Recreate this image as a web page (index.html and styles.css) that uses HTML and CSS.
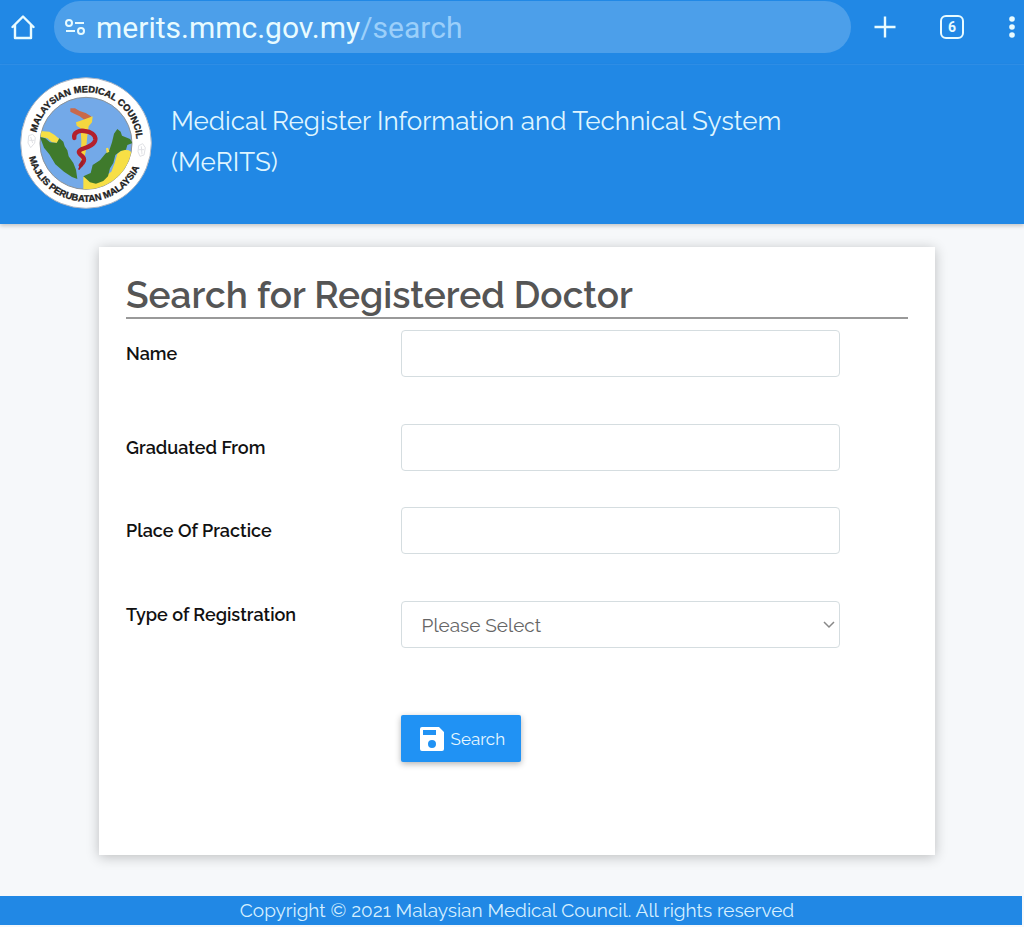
FILE: index.html
```
<!DOCTYPE html>
<html lang="en">
<head>
    <meta charset="UTF-8">
    <meta name="viewport" content="width=device-width, initial-scale=1.0">
    <title>MeRITS</title>
    <link rel="stylesheet" href="styles.css">
</head>
<body>
    <div class="browser-bar">
        <button class="bar-btn" type="button" aria-label="Home">
            <svg width="24" height="26" viewBox="0 0 24 26" fill="none" stroke="currentColor" stroke-width="2.4" stroke-linejoin="round" stroke-linecap="round">
                <path d="M1.5 13 12 2.500l10.500 10.500M4 11v13h16V11"/>
            </svg>
        </button>
        <div class="url-bar">
            <svg width="20" height="18" viewBox="0 0 20 18" fill="none" stroke="currentColor" stroke-width="2">
                <circle cx="4" cy="5" r="3"/>
                <path d="M10 5h9M1 13h9"/>
                <circle cx="16" cy="13" r="3"/>
            </svg>
            <span class="url">merits.mmc.gov.my<span class="url-path">/search</span></span>
        </div>
        <div class="bar-actions">
            <button class="bar-btn" type="button" aria-label="New tab">
                <svg width="22" height="22" viewBox="0 0 22 22" fill="none" stroke="currentColor" stroke-width="2.4">
                    <path d="M11 0.500v21M0.500 11h21"/>
                </svg>
            </button>
            <button class="bar-btn tab-count" type="button">6</button>
            <button class="bar-btn" type="button" aria-label="Menu">
                <svg width="8" height="22" viewBox="0 0 8 22" fill="currentColor">
                    <circle cx="4" cy="3" r="2.800"/>
                    <circle cx="4" cy="11" r="2.800"/>
                    <circle cx="4" cy="19" r="2.800"/>
                </svg>
            </button>
        </div>
    </div>

    <header class="header">
        <svg class="logo" viewBox="60 50 396 396" role="img" aria-label="Malaysian Medical Council">
            <defs>
                <path id="arc-top" d="M106 248a152 152 0 0 1 304 0"/>
                <path id="arc-bottom" d="M82 248a176 176 0 0 0 352 0"/>
                <clipPath id="disc"><circle cx="258" cy="249" r="138"/></clipPath>
            </defs>
            <circle cx="258" cy="248" r="196" fill="#fff" stroke="#a9b4c4" stroke-width="3"/>
            <circle cx="258" cy="249" r="138" fill="#73a9e8" stroke="#8b9298" stroke-width="3"/>
            <g clip-path="url(#disc)">
                <path fill="#f7df45" d="M118 212l30 2 16 10 14 12-4 12-18-2-14-12-20-4z"/>
                <path fill="#3f7a2c" d="M120 230l16 4 14 12 20 2 8-14 12 10 4 14 8 12 4 18 14 20 8 20 4 28-16-6-24-16-26-22-18-30-16-20z"/>
                <path fill="#f7df45" d="M250 350l20-4 20 6 26-4 18-14 10-26 8-28 16-12 18 2 30 20v70l-70 40h-96z"/>
                <path fill="#3f7a2c" d="M250 348l22-10 6-24 22-14 16-20 12-10 8-24 6-26 10-14 10 8 4 12 24 10 8 12-16 6-4 14-16 4-16 12-6 24-10 16-6 24-14 14-22 8-18-4z"/>
                <path fill="#f7df45" d="M318 264l6-2 4 12-8 4z"/>
                <path fill="#c9694a" d="M211 144l14 0 14 8 18 6 16 10-2 12-18-2-14-10-16-8-12-6z"/>
                <path fill="#f5d63f" d="M228 186l22-8 28-10-2 18-10 12-4 28-4 44-6 28-6 14-4-20 2-48-2-40-12-8z"/>
                <path fill="none" stroke="#b3202c" stroke-width="13" stroke-linecap="round" stroke-linejoin="round" d="M223 233c-4-16 14-24 30-21 20 2 34 12 33 26-2 16-24 22-42 29-12 6-8 12 2 20 12 10 4 20-4 28"/>
                <path fill="#9b1d27" d="M251 300l-3 16-10 13-4-2 5-10 4-16z"/>
            </g>
            <g fill="none" stroke="#e0e1e5" stroke-width="3">
                <path d="M86 226l12-4 8 10-2 16-12 14-8-14zM88 240h16M92 230l6 18"/>
                <path d="M416 256l12-6 8 12-4 22-12 4-6-14zM416 268h16M424 258l2 24"/>
            </g>
            <text class="logo-text"><textPath href="#arc-top" startOffset="52%">MALAYSIAN MEDICAL COUNCIL</textPath></text>
            <text class="logo-text"><textPath href="#arc-bottom" startOffset="47%">MAJLIS PERUBATAN MALAYSIA</textPath></text>
        </svg>
        <p class="site-name">Medical Register Information and Technical System<br>(MeRITS)</p>
    </header>

    <main class="main">
        <form class="card">
            <h1 class="title">Search for Registered Doctor</h1>
            <div class="row">
                <label for="name">Name</label>
                <input class="control" type="text" id="name">
            </div>
            <div class="row">
                <label for="graduated">Graduated From</label>
                <input class="control" type="text" id="graduated">
            </div>
            <div class="row row-near">
                <label for="practice">Place Of Practice</label>
                <input class="control" type="text" id="practice">
            </div>
            <div class="row row-select">
                <label for="type">Type of Registration</label>
                <div class="select-wrap">
                    <select class="control" id="type">
                        <option>Please Select</option>
                    </select>
                    <svg class="chevron" width="12" height="8" viewBox="0 0 12 8" fill="none" stroke="currentColor" stroke-width="1.500">
                        <path d="M1 1l5 5 5-5"/>
                    </svg>
                </div>
            </div>
            <div class="row row-submit">
                <button class="search-btn" type="button">
                    <svg width="24" height="24" viewBox="0 0 24 24" fill="currentColor" fill-rule="evenodd">
                        <path d="M2 0h17l5 5v17a2 2 0 0 1-2 2H2a2 2 0 0 1-2-2V2a2 2 0 0 1 2-2zM3 3v5h13V3zM12 13a4 4 0 1 0 0 8a4 4 0 1 0 0-8z"/>
                    </svg>
                    Search
                </button>
            </div>
        </form>
    </main>

    <footer class="footer">Copyright © 2021 Malaysian Medical Council. All rights reserved</footer>
</body>
</html>
```
FILE: styles.css
```
* {
    box-sizing: border-box;
}

body {
    display: flex;
    flex-direction: column;
    min-height: 100vh;
    margin: 0;
    background-color: #f6f8fa;
    font-family: Raleway, Lato, sans-serif;
    font-size: 19px;
}

/* browser bar */
.browser-bar {
    display: flex;
    align-items: center;
    height: 65px;
    padding: 1px 8px 11px 11px;
    border-bottom: 1px solid #2f90ea;
    background-color: #2188e5;
    color: #e8fbff;
}

.bar-btn {
    display: flex;
    align-items: center;
    justify-content: center;
    padding: 0;
    border: 0;
    background: none;
    color: inherit;
}

.url-bar {
    display: flex;
    flex: 1;
    align-items: center;
    gap: 11px;
    height: 52px;
    margin-left: 19px;
    padding-left: 11px;
    border-radius: 26px;
    background-color: #4c9fea;
}

.url {
    padding-top: 1px;
    font-family: "Google Sans", Roboto, sans-serif;
    font-size: 30px;
    line-height: 36px;
}

.url-path {
    color: #9bcffa;
}

.bar-actions {
    display: flex;
    align-items: center;
    gap: 44px;
    margin-left: 23px;
}

.tab-count {
    width: 24px;
    height: 24px;
    border: 2px solid #e8fbff;
    border-radius: 6px;
    font-family: Roboto, sans-serif;
    font-size: 14px;
    font-weight: bold;
}

/* header */
.header {
    display: flex;
    align-items: center;
    gap: 19px;
    padding: 11px 20px 14px;
    background-color: #2188e5;
    box-shadow: 0 2px 4px rgba(0, 0, 0, 0.2);
    color: #dff5ff;
}

.logo {
    flex: none;
    width: 132px;
    height: 134px;
}

.logo-text {
    fill: #1c1c1c;
    stroke: #1c1c1c;
    stroke-width: 1;
    font-family: "Liberation Sans Narrow", "Liberation Sans", sans-serif;
    font-size: 28px;
    font-weight: bold;
    text-anchor: middle;
}

.site-name {
    margin: 0;
    padding-bottom: 2px;
    font-size: 26px;
    line-height: 41px;
}

/* search form */
.main {
    flex: 1;
    padding: 23px 89px 40px 99px;
}

.card {
    padding: 26px 27px 93px;
    background-color: #fff;
    box-shadow: 0 2px 12px rgba(0, 0, 0, 0.24);
}

.title {
    margin: 0 0 11px;
    border-bottom: 2px solid #999;
    color: #555;
    font-size: 37px;
    font-weight: 600;
    line-height: 44px;
}

.row {
    display: grid;
    grid-template-columns: 5fr 8fr;
    align-items: center;
    margin-bottom: 47px;
    padding-right: 68px;
}

.row:has(+ .row-near) {
    margin-bottom: 36px;
}

.row label {
    color: #111;
    font-size: 18px;
    font-weight: 600;
}

.row-select {
    align-items: start;
    margin-bottom: 67px;
}

.row-select label {
    line-height: 28px;
}

.row-submit {
    margin-bottom: 0;
}

.control {
    width: 100%;
    height: 47px;
    padding: 0 20px;
    border: 1px solid #d5dde0;
    border-radius: 4px;
    background-color: #fff;
    color: #666;
    font: inherit;
}

select.control {
    display: block;
    appearance: none;
}

.select-wrap {
    position: relative;
}

.chevron {
    position: absolute;
    top: 20px;
    right: 5px;
    color: #888;
    pointer-events: none;
}

.search-btn {
    display: flex;
    grid-column: 2;
    justify-self: start;
    align-items: center;
    gap: 7px;
    height: 47px;
    padding: 0 16px 0 19px;
    border: 0;
    border-radius: 2px;
    background-color: #2092f4;
    box-shadow: 0 2px 6px rgba(0, 0, 0, 0.3);
    color: #e6f7ff;
    font: inherit;
    font-size: 17px;
}

.search-btn svg {
    color: #fff;
}

/* footer */
.footer {
    margin: 0 2px 2px 0;
    padding-left: 12px;
    background-color: #2188e5;
    color: #d5efff;
    line-height: 29px;
    text-align: center;
}
```
